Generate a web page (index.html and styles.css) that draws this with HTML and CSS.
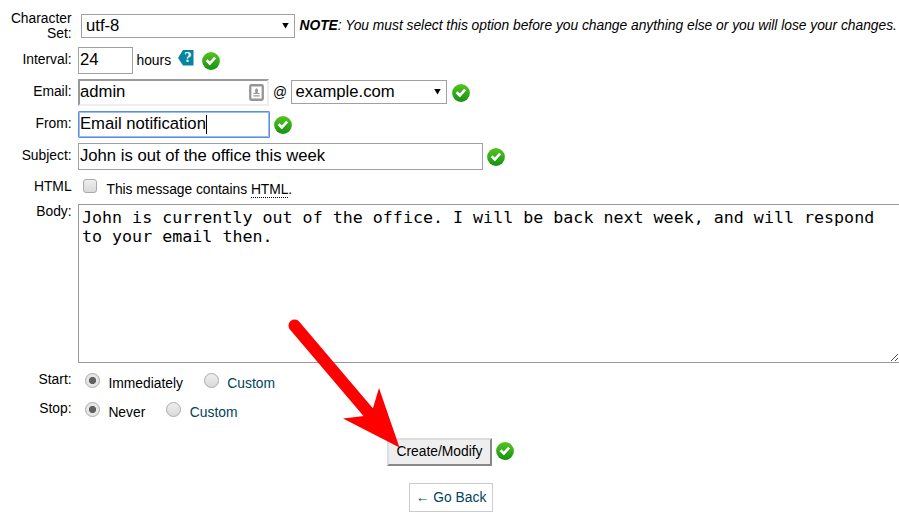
FILE: index.html
```html
<!DOCTYPE html>
<html lang="en">
<head>
<meta charset="utf-8">
<title>Autoresponder</title>
<link rel="stylesheet" href="styles.css">
</head>
<body>
<svg width="0" height="0" class="defs">
  <defs>
    <linearGradient id="green" x1="0" y1="0" x2="0" y2="1"><stop offset="0" stop-color="#55c51c"/><stop offset=".5" stop-color="#35ad1a"/><stop offset="1" stop-color="#159010"/></linearGradient>
    <symbol id="ok" viewBox="0 0 18 18">
      <circle cx="9" cy="9" r="8.9" fill="url(#green)"/>
      <path d="M5 9.4 L7.9 12.4 L13.1 6.4" fill="none" stroke="#167d10" stroke-opacity=".45" stroke-width="3.2"/>
      <path d="M4.6 8.3 L7.8 11.4 L13.2 5.6" fill="none" stroke="#fff" stroke-width="2.8"/>
    </symbol>
  </defs>
</svg>
<form class="form">
  <div class="row charset">
    <label class="label">Character<br>Set:</label>
    <div class="select wide"><span>utf-8</span><i class="arrow"></i></div>
    <p class="note"><b>NOTE</b>: You must select this option before you change anything else or you will lose your changes.</p>
  </div>
  <div class="row">
    <label class="label">Interval:</label>
    <div class="input hours">24</div>
    <span class="unit">hours</span>
    <svg class="help" width="16" height="16" viewBox="0 0 16 16"><path d="M5 0H15.5V15.5H5L0 8Z" fill="#0784a4"/><text x="9.8" y="12" text-anchor="middle">?</text></svg>
    <svg class="ok ok-hours"><use href="#ok"/></svg>
  </div>
  <div class="row">
    <label class="label">Email:</label>
    <div class="input email"><span>admin</span>
      <svg width="15" height="17" viewBox="0 0 15 17"><rect x="1.25" y="1.25" width="12.5" height="14.5" rx="1" fill="#fff" stroke="#969696" stroke-width="2.3"/><path d="M7.5 4L9.2 6L8.5 8.4L10.7 9.3V10H4.3V9.3L6.5 8.4L5.8 6ZM4.3 11.2H10.7V12.4H4.3Z" fill="#999"/></svg>
    </div>
    <span class="at">@</span>
    <div class="select domain"><span>example.com</span><i class="arrow"></i></div>
    <svg class="ok"><use href="#ok"/></svg>
  </div>
  <div class="row">
    <label class="label">From:</label>
    <div class="input from">Email notification<i class="caret"></i></div>
    <svg class="ok"><use href="#ok"/></svg>
  </div>
  <div class="row">
    <label class="label">Subject:</label>
    <div class="input subject">John is out of the office this week</div>
    <svg class="ok ok-subject"><use href="#ok"/></svg>
  </div>
  <div class="row html">
    <label class="label">HTML</label>
    <i class="checkbox"></i>
    <span class="option">This message contains <abbr>HTML</abbr>.</span>
  </div>
  <div class="row body">
    <label class="label">Body:</label>
    <div class="textarea"><div>John is currently out of the office. I will be back next week, and will respond<br>to your email then.</div>
      <svg class="grip" width="9" height="9" viewBox="0 0 9 9"><path d="M1 8L8 1M5 8L8 5" fill="none" stroke="#555" stroke-width="1"/></svg>
    </div>
  </div>
  <div class="row time">
    <label class="label">Start:</label>
    <i class="radio on"></i><span class="option start-now">Immediately</span>
    <i class="radio next"></i><span class="option link">Custom</span>
  </div>
  <div class="row time">
    <label class="label">Stop:</label>
    <i class="radio on"></i><span class="option never">Never</span>
    <i class="radio next"></i><span class="option link">Custom</span>
  </div>
  <div class="actions">
    <div class="button">Create/Modify</div>
    <svg class="ok"><use href="#ok"/></svg>
  </div>
  <div class="back"><a class="back-link"><span>←</span> Go Back</a></div>
</form>
<svg class="pointer" width="112" height="132" viewBox="0 0 112 132"><path d="M6.500 7.500L86 101" stroke="#f00" stroke-width="12" stroke-linecap="round"/><path d="M111.500 129.500L91 70L85 90L76 98L55 100.500Z" fill="#f00"/></svg>
</body>
</html>
```
FILE: styles.css
```css
* { box-sizing: border-box; }
body {
  margin: 0;
  width: 899px;
  height: 516px;
  overflow: hidden;
  position: relative;
  background: #fff;
  color: #000;
  font: 13.83px/16px "Liberation Sans", Arial, sans-serif;
}
svg { display: block; flex: none; }
.defs { position: absolute; }
.form { padding-top: 11px; }
.row { display: flex; align-items: flex-start; height: 32px; white-space: nowrap; }
.row > * { flex: none; }
.label { width: 71.6px; margin-right: 6.4px; padding-top: 4px; text-align: right; }
.charset { height: 36px; }
.charset .label { padding: 0; line-height: 15px; }
.select {
  display: flex;
  align-items: center;
  justify-content: space-between;
  height: 24px;
  padding: 0 5px 1px 4px;
  border: 1px solid #a0a0a0;
  font-size: 16.67px;
}
.wide { width: 214px; margin: 3px 0 0 3px; }
.domain { width: 156px; margin: 1px 5px 0 4px; padding-left: 3.6px; }
.arrow { width: 7px; height: 6px; background: #000; clip-path: polygon(0 0, 100% 0, 50% 100%); }
.note { margin: 6px 0 0 4.5px; font-style: italic; letter-spacing: -.02px; }
.input {
  height: 27px;
  border: 1px solid #a0a0a0;
  padding-left: 1px;
  font-size: 16.67px;
  line-height: 24px;
}
.hours { width: 55px; }
.unit { width: 34.5px; margin: 5px 0 0 3.5px; }
.help { margin: 3px 0 0 7px; }
.help text { font: bold 12px "DejaVu Serif", serif; fill: #fff; }
.ok { width: 18px; height: 18px; margin-top: 5px; }
.ok-hours { margin-left: 8px; }
.email {
  display: flex;
  justify-content: space-between;
  width: 191px;
  padding: 0 3px 0 0;
  border: 2px solid;
  border-color: #999 #eee #eee #999;
  line-height: 22px;
}
.email svg { margin-top: 3px; }
.at { width: 14px; margin: 5px 0 0 4px; }
.from {
  display: flex;
  width: 192px;
  margin-right: 4px;
  border: 1px solid #5b8fdf;
  border-radius: 1px;
  box-shadow: inset 0 0 0 1px #9bbcef;
}
.caret { width: 1px; height: 19px; margin-top: 3px; background: #000; }
.subject { width: 405px; }
.ok-subject { margin-left: 4px; }
.html { height: 29px; }
.html .label { padding-top: 3px; }
.html .option { padding-top: 6px; letter-spacing: -.04px; }
.checkbox {
  width: 14px;
  height: 14px;
  margin: 4px 9.5px 0 5px;
  border: 1px solid #aaa;
  border-radius: 3px;
  background: linear-gradient(#eee, #dadada);
}
abbr { display: inline-block; height: 17px; border-bottom: 1px dotted #000; }
.body { height: 167px; }
.body .label { padding: 0; margin-top: -1px; }
.textarea {
  position: relative;
  width: 822px;
  height: 159px;
  padding: 3px;
  border: 1px solid #999;
  font: 16.67px/19px "DejaVu Sans Mono", monospace;
}
.grip { position: absolute; right: 0; bottom: 0; }
.time { height: 29px; }
.time .label { padding-top: 0; }
.radio {
  width: 15px;
  height: 15px;
  margin: 2px 8.4px 0 7px;
  border: 1px solid #aaa;
  border-radius: 50%;
  background: linear-gradient(#eee, #dadada);
}
.radio.on { background: radial-gradient(circle, #606060 3.2px, #e6e6e6 4px); }
.radio.next { margin-left: 21px; }
.time .option { padding-top: 4px; }
.start-now { width: 74.6px; }
.never { width: 36.6px; }
.never ~ .link { margin-left: .5px; }
.link, .back-link { color: #00445a; }
.actions { display: flex; justify-content: center; align-items: flex-start; padding: 9px 0 0 2px; height: 54px; }
.actions .ok { margin: 4px 0 0 4px; }
.button {
  width: 105px;
  height: 28px;
  border: 2px solid;
  border-color: #ddd #888 #888 #ddd;
  background: #eee;
  text-align: center;
  line-height: 23px;
}
.back { display: flex; justify-content: center; padding-left: 3px; }
.back-link { width: 84px; height: 29px; border: 1px solid #ccc; text-align: center; line-height: 27px; }
.pointer { position: absolute; left: 288px; top: 318px; }
```
